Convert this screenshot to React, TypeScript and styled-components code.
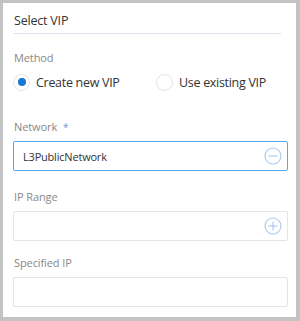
import styled, { createGlobalStyle } from 'styled-components';

const GlobalStyle = createGlobalStyle`
  html, body {
    margin: 0;
    padding: 0;
    background: #c3c3c3;
  }
  body {
    font-family: "Open Sans", "Noto Sans", sans-serif;
  }
`;

const Panel = styled.div`
  box-sizing: border-box;
  margin: 3px 4px 0 3px;
  height: 314px;
  background: #fff;
  padding: 0 8px 0 10px;
`;

const Header = styled.div`
  margin-right: 7px;
  padding: 8px 0 2px 1px;
  line-height: 20px;
  font-size: 12.5px;
  letter-spacing: -0.2px;
  color: #333;
  border-bottom: 1px solid #dde5ee;
`;

const Label = styled.div<{ $top: number }>`
  margin-top: ${(p) => p.$top}px;
  line-height: 18px;
  font-size: 11px;
  letter-spacing: -0.1px;
  color: #888;
  padding-left: 1px;
`;

const Star = styled.span`
  color: #6a9bd8;
  margin-left: 6px;
  font-size: 10px;
`;

const RadioRow = styled.div`
  display: flex;
  margin-top: 5px;
  height: 20px;
  align-items: center;
`;

const RadioOption = styled.label<{ $width?: number }>`
  display: flex;
  flex-shrink: 0;
  align-items: center;
  gap: 6px;
  width: ${(p) => (p.$width ? `${p.$width}px` : 'auto')};
  font-size: 12.5px;
  letter-spacing: -0.3px;
  color: #333;
`;

const RadioDot = styled.span<{ $on?: boolean }>`
  box-sizing: border-box;
  width: 17px;
  height: 17px;
  border-radius: 50%;
  border: 1px solid #e0e4e9;
  display: flex;
  align-items: center;
  justify-content: center;
  &::after {
    content: '';
    width: 8px;
    height: 8px;
    border-radius: 50%;
    background: ${(p) => (p.$on ? '#1478d4' : 'transparent')};
  }
`;

const InputBox = styled.div<{ $active?: boolean }>`
  box-sizing: border-box;
  margin-top: 5px;
  height: 30px;
  display: flex;
  align-items: center;
  padding: 0 5px 0 9px;
  border: 1px solid ${(p) => (p.$active ? '#58a8f0' : '#e1e6ec')};
  border-radius: 2px;
  font-size: 11px;
  letter-spacing: -0.2px;
  color: #333;
`;

const Value = styled.span`
  flex: 1;
`;

const CircleIcon = ({ plus }: { plus?: boolean }) => (
  <svg width="18" height="18" viewBox="0 0 18 18" fill="none" stroke="#a9c9ee" strokeWidth="1.1">
    <circle cx="9" cy="9" r="8" />
    <line x1="4.5" y1="9" x2="13.5" y2="9" />
    {plus && <line x1="9" y1="4.5" x2="9" y2="13.5" />}
  </svg>
);

const App = () => (
  <>
    <GlobalStyle />
    <Panel>
      <Header>Select VIP</Header>
      <Label $top={15}>Method</Label>
      <RadioRow>
        <RadioOption $width={143}>
          <RadioDot $on />
          Create new VIP
        </RadioOption>
        <RadioOption>
          <RadioDot />
          Use existing VIP
        </RadioOption>
      </RadioRow>
      <Label $top={26}>
        Network<Star>*</Star>
      </Label>
      <InputBox $active>
        <Value>L3PublicNetwork</Value>
        <CircleIcon />
      </InputBox>
      <Label $top={17}>IP Range</Label>
      <InputBox>
        <Value />
        <CircleIcon plus />
      </InputBox>
      <Label $top={13}>Specified IP</Label>
      <InputBox />
    </Panel>
  </>
);

export default App;
